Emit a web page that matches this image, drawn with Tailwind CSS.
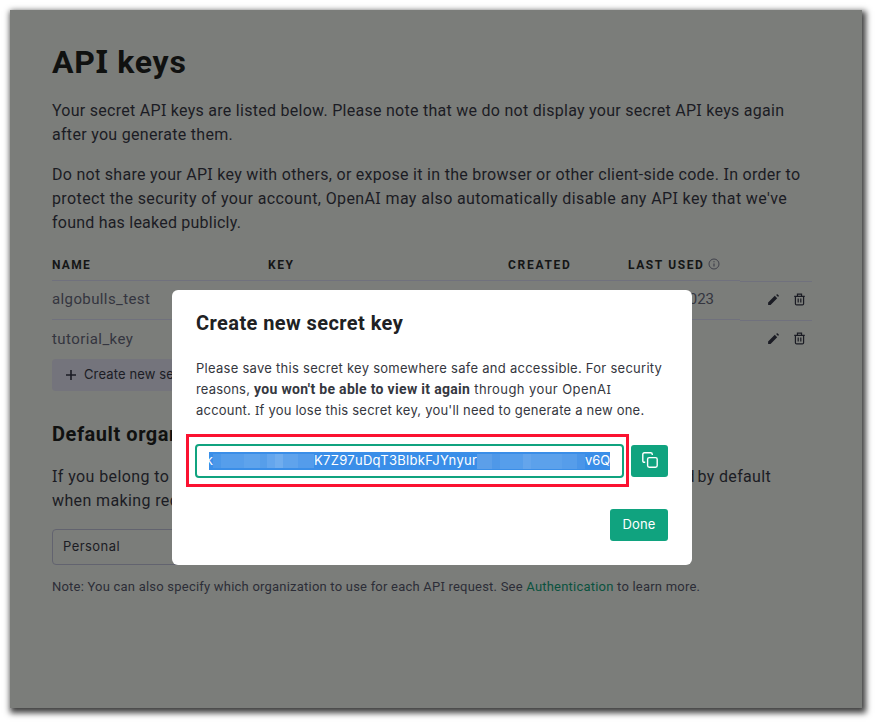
<!DOCTYPE html>
<html lang="en">
<head>
<meta charset="utf-8">
<title>API keys</title>
<script src="https://cdn.jsdelivr.net/npm/@tailwindcss/browser@4"></script>
</head>
<body class="bg-white w-[878px] h-[724px] overflow-hidden p-[10px] [font-family:Roboto,sans-serif]">
<div class="relative w-[852px] h-[698px] bg-[#7b7d7a] px-[42px] pt-8 text-[#1b1c24] shadow-[2px_3px_6px_2px_rgba(0,0,0,0.75)] whitespace-nowrap">
  <h1 class="h-10 leading-10 text-[32px] font-bold text-[#101110] tracking-[0.7px]">AP<span class="[font-family:'Noto_Sans'] leading-[0]">I</span> keys</h1>
  <div class="mt-[17px] text-base leading-6">
    <p class="tracking-[0.273px]">Your secret AP<span class="[font-family:'Noto_Sans'] leading-[0]">I</span> keys are listed below. Please note that we do not display your secret AP<span class="[font-family:'Noto_Sans'] leading-[0]">I</span> keys again<br><span class="tracking-[0.3px]">after you generate them.</span></p>
    <p class="mt-4 tracking-[0.288px]">Do not share your AP<span class="[font-family:'Noto_Sans'] leading-[0]">I</span> key with others, or expose it in the browser or other client-side code. <span class="[font-family:'Noto_Sans'] leading-[0]">I</span>n order to<br><span class="tracking-[0.38px]">protect the security of your account, OpenA<span class="[font-family:'Noto_Sans'] leading-[0]">I</span> may also automatically disable any AP<span class="[font-family:'Noto_Sans'] leading-[0]">I</span> key that we've</span><br><span class="tracking-[0.22px]">found has leaked publicly.</span></p>
  </div>
  <div class="mt-[14px] flex">
    <div class="w-[688px] text-[#34353f] text-[15px]">
      <div class="grid grid-cols-[216px_240px_120px_112px] h-8 leading-8 text-xs font-bold text-[#151616] border-b border-[#70717d] tracking-[1.5px]">
        <div class="tracking-[1.3px]">NAME</div><div>KEY</div><div class="tracking-[1.7px]">CREATED</div>
        <div class="flex items-center gap-1"><span class="tracking-[1.6px]">LAST USED</span>
          <svg class="w-3 h-3 mb-0.5" viewBox="0 0 12 12" fill="none" stroke="#40414b"><circle cx="6" cy="6" r="5"/><path d="M6 5.4V8.4M6 3.3V4.3" stroke-width="1.2"/></svg></div>
      </div>
      <div class="flex justify-between h-[39px] leading-[37px] border-b border-[#70717d] pr-[26px]"><span class="tracking-[0.39px]">algobulls_test</span><span>2023</span></div>
      <div class="h-[39px] leading-[38px] tracking-[0.42px]">tutorial_key</div>
    </div>
    <div class="w-[72px] pt-8 text-[#1b1c24]">
      <div class="flex items-center gap-[13px] h-10 border-y border-[#70717d] pl-[26.5px] pb-[3px]">
        <svg class="w-[13px] h-[13px]" viewBox="0 0 14 14" fill="currentColor"><path d="M1.2 12.8V10.2L8.4 3l2.6 2.6-7.2 7.2zM9.8 2.1l.6-.6q.6-.5 1.2 0l.9.9q.5.6 0 1.2l-.5.7z"/></svg>
        <svg class="w-[13px] h-[13px]" viewBox="0 0 14 14" fill="none" stroke="currentColor" stroke-width="1.3"><path d="M1.3 3.6h11.4M4.8 3.4V1.3h4.4v2.1M2.6 3.8v7.7q0 1.3 1.3 1.3h6.2q1.3 0 1.3-1.3V3.8M5.6 5.8v4.4M8.4 5.8v4.4"/></svg>
      </div>
      <div class="flex items-center gap-[13px] h-[35px] pl-[26.5px]">
        <svg class="w-[13px] h-[13px]" viewBox="0 0 14 14" fill="currentColor"><path d="M1.2 12.8V10.2L8.4 3l2.6 2.6-7.2 7.2zM9.8 2.1l.6-.6q.6-.5 1.2 0l.9.9q.5.6 0 1.2l-.5.7z"/></svg>
        <svg class="w-[13px] h-[13px]" viewBox="0 0 14 14" fill="none" stroke="currentColor" stroke-width="1.3"><path d="M1.3 3.6h11.4M4.8 3.4V1.3h4.4v2.1M2.6 3.8v7.7q0 1.3 1.3 1.3h6.2q1.3 0 1.3-1.3V3.8M5.6 5.8v4.4M8.4 5.8v4.4"/></svg>
      </div>
    </div>
  </div>
  <button class="flex items-center gap-[7px] w-[122px] h-8 rounded bg-[#74747c] pl-[13px] text-[13px] [font-family:Inter,sans-serif] tracking-[0.12px]">
    <svg class="w-3 h-3 shrink-0" viewBox="0 0 12 12" stroke="currentColor" stroke-width="1.6"><path d="M6 1v10M1 6h10"/></svg>
    <span>Create new se</span></button>
  <h2 class="mt-[27px] h-8 leading-8 text-xl font-bold text-[#101110] tracking-[0.55px]">Default organization</h2>
  <div class="mt-[15px] text-base leading-6">
    <p class="flex justify-between pr-[49px]"><span class="tracking-[0.4px]"><span class="[font-family:'Noto_Sans'] leading-[0]">I</span>f you belong to</span><span class="tracking-[0.33px]"><span class="-mr-[1.5px]">d</span> by default</span></p>
    <p class="tracking-[0.38px]">when making requests</p>
  </div>
  <div class="mt-4 w-[300px] h-9 leading-[33px] rounded border border-[#62636f] pl-2.5 text-[13px] [font-family:Inter,sans-serif] tracking-[0.45px]">Personal</div>
  <p class="mt-[11px] text-[13px] leading-[22px] text-[#2c2d37] tracking-[0.215px]">Note: You can also specify which organization to use for each AP<span class="[font-family:'Noto_Sans'] leading-[0]">I</span> request. See <a class="text-[#0a523e]">Authentication</a> to learn more.</p>

  <div class="absolute left-[162px] top-[280px] w-[520px] h-[275px] rounded-md bg-white px-6 pt-[17px] text-[#353740] text-[13px] [font-family:Inter,sans-serif]">
    <h3 class="h-8 leading-8 text-[20px] font-bold text-[#202123] [font-family:Roboto,sans-serif] tracking-[0.42px]">Create new secret key</h3>
    <div class="mt-[19px] leading-[21px]">
      <p class="tracking-[0.27px]">Please save this secret key somewhere safe and accessible. For security</p>
      <p class="flex gap-1"><span class="tracking-[0.18px]">reasons,</span><b class="[font-family:Roboto,sans-serif] text-[14px] tracking-[0.31px]">you won't be able to view it again</b><span class="tracking-[0.42px]">through your OpenA<span class="[font-family:'Noto_Sans'] leading-[0]">I</span></span></p>
      <p class="tracking-[0.215px]">account. <span class="[font-family:'Noto_Sans'] leading-[0]">I</span>f you lose this secret key, you'll need to generate a new one.</p>
    </div>
    <div class="-ml-[10px] mt-[13px] flex items-center">
      <div class="w-[443px] h-[53px] border-[3px] border-[#fb1231] p-[6px] pt-[7px]">
        <div class="w-[429px] h-[34px] border-2 border-[#10a37f] rounded-[4px] pl-3 pt-[6px]">
          <div class="flex w-[401px] h-[18px] leading-[16px] bg-[#3a8ee8] text-white overflow-hidden">
            <span class="w-1 [direction:rtl] overflow-hidden">k</span>
            <span class="flex w-[101px] h-[14px] mt-[2px]"><i class="flex-1 bg-[#4c98e9]"></i><i class="flex-[3] bg-[#569eeb]"></i><i class="flex-[2] bg-[#5ea3ec]"></i><i class="flex-1 bg-[#569eea]"></i><i class="flex-1 bg-[#64a6ed]"></i><i class="flex-1 bg-[#70adee]"></i><i class="flex-[2] bg-[#5fa3ec]"></i><i class="flex-[2] bg-[#549ceb]"></i></span>
            <span class="w-[163px] tracking-[0.3px]">K7Z97uDqT3BlbkFJYnyur</span>
            <span class="flex w-[108px] h-[15px] mt-[2px]"><i class="flex-[2] bg-[#5c9fe9]"></i><i class="flex-1 bg-[#4f98e8]"></i><i class="flex-[3] bg-[#569eeb]"></i><i class="flex-1 bg-[#64a5ec]"></i><i class="flex-[4] bg-[#5ca1eb]"></i><i class="flex-[2] bg-[#569dea]"></i><i class="flex-1 bg-[#4a95e8]"></i></span>
            <span class="tracking-[-0.1px]">v6Q</span>
          </div>
        </div>
      </div>
      <div class="ml-[2px] w-[37px] h-8 rounded-[3px] bg-[#10a37f] flex items-center justify-center pb-px">
        <svg class="w-4 h-4" viewBox="0 0 16 16" fill="none" stroke="white" stroke-width="1.4"><rect x="5.6" y="5.6" width="9.6" height="9.6" rx="1.6"/><path d="M3.2 10.3H2.4Q.8 10.3.8 8.7V2.4Q.8.8 2.4.8H8.7Q10.3.8 10.3 2.4V3"/></svg>
      </div>
    </div>
    <div class="mt-[22px] flex justify-end"><button class="w-[58px] h-8 pb-px rounded-[3px] bg-[#10a37f] text-white tracking-[0.2px]">Done</button></div>
  </div>
</div>
</body>
</html>
